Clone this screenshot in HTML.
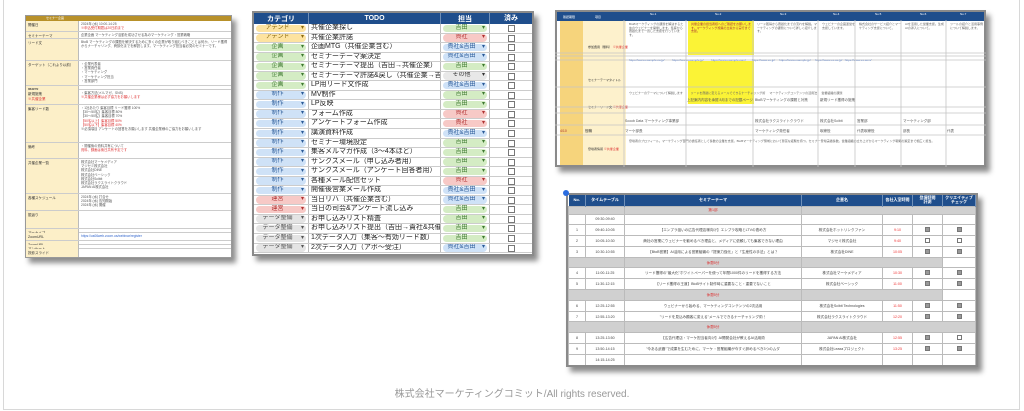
<!DOCTYPE html>
<html><head><meta charset="utf-8">
<style>
*{box-sizing:border-box;margin:0;padding:0}
body{width:1024px;height:411px;background:#fff;position:relative;overflow:hidden;font-family:"Liberation Sans","Noto Sans CJK JP",sans-serif}
.frame{position:absolute;left:3px;top:-5px;width:1017px;height:415px;border:1px solid #d8d8d8}
.doc{position:absolute;background:#fff;border:2px solid #8a8a8a;box-shadow:4px 5px 5px rgba(0,0,0,.45);overflow:hidden}
table{border-collapse:collapse;width:100%;table-layout:fixed}
td,th{overflow:hidden;white-space:nowrap}
/* doc2 */
#d2{left:252px;top:11px;width:282px;height:245px}
#d2 .hd{display:flex;height:11px;background:#1f4e8c;color:#fff;font-size:7px;line-height:11px;font-weight:bold}
#d2 .rw{display:flex;height:9.55px;border-bottom:1px solid #ccc;font-size:7px;line-height:8.5px;color:#222;overflow:hidden}
#d2 .c1{width:55px;border-right:1px solid #bbb;padding:0.5px 2px;text-align:center;flex:none}
#d2 .c2{width:132px;border-right:1px solid #bbb;padding:0 2px;flex:none;white-space:nowrap;overflow:hidden}
#d2 .c3{width:49px;border-right:1px solid #bbb;padding:0.5px 2px;flex:none;text-align:center}
#d2 .c4{flex:1;text-align:center;padding-top:1px}
.pill{display:block;border-radius:4px;height:7.5px;font-size:6px;line-height:7.5px;text-align:center;position:relative;padding-right:7px;white-space:nowrap}
.pill:after{content:"▾";position:absolute;right:2px;top:0;font-size:6px}
.at{background:#fde3a0;color:#8a6a10}.ki{background:#d4ecc4;color:#3e7a30}.se{background:#cfe2f7;color:#2a5a98}.un{background:#f7c9c6;color:#b03030}.de{background:#e4e4e4;color:#555}.so{background:#e8e8e8;color:#333}
.cb{display:inline-block;width:7px;height:7px;border:1px solid #777;background:#fff;vertical-align:top}
/* doc1 */
#d1{left:25px;top:15px;width:207px;height:243px;border-width:1px;border-color:#999}
#d1 .row{position:absolute;left:0;width:100%;border-bottom:1px solid #ccc}
#d1 .l{position:absolute;left:0;top:0;bottom:0;width:53px;background:#fcefc8;border-right:1px solid #bbb;font-size:3.5px;color:#333;padding:2px}
#d1 .r{position:absolute;left:55px;top:1px;right:2px;font-size:3.3px;line-height:4.2px;color:#555;white-space:normal;overflow:hidden;bottom:0}
.red{color:#d33}
/* doc3 */
#d3{left:555px;top:10px;width:431px;height:157px;border-width:2px}
#d3 .c{position:absolute;overflow:hidden;font-size:3px;line-height:3.6px;color:#666;border-right:1px solid #bbb;border-bottom:1px solid #bbb;padding:1px;white-space:normal}
/* doc4 */
#d4{left:566px;top:193px;width:412px;height:174px;border-width:2px}
#d4 th{background:#1f4e8c;color:#fff;font-size:4px;height:11px;border-right:1px solid #6f8fb8;line-height:4.5px}
#d4 td{height:10.8px;font-size:3.6px;line-height:4px;color:#444;border:1px solid #bbb;text-align:center}
#d4 tr.g td{background:#d0d0d0;color:#d33}
#d4 .t{color:#e33}
#d4 .k{display:inline-block;width:5px;height:5px;background:#999;border:1px solid #777}
#d4 .k.e{background:#fff}
.foot{position:absolute;left:0;width:1024px;top:385px;text-align:center;font-size:10px;color:#999}
</style></head><body>
<div class="frame"></div>

<!-- doc1 -->
<div class="doc" id="d1">
<div style="position:absolute;left:0;top:0;width:100%;height:5px;background:#b8912a;font-size:3px;color:#fff;padding-left:20px">セミナー企画</div>
<div class="row" style="top:5px;height:11px"><div class="l">開催日</div><div class="r">2024年 (水) 10:00-14:25<br><span class="red">※申込受付期間は20日前まで</span></div></div>
<div class="row" style="top:16px;height:7px"><div class="l">セミナーテーマ</div><div class="r">企業企画 マーケティング活動を成功させる為のマーケティング・営業戦略</div></div>
<div class="row" style="top:23px;height:22px"><div class="l">リード文</div><div class="r">BtoB マーケティングの課題を解決するために多くの企業が取り組むべきこととは何か。リード獲得からナーチャリング、商談化までを解説します。マーケティング担当者必見のセミナーです。</div></div>
<div class="row" style="top:45px;height:25px"><div class="l">ターゲット（これより以前）</div><div class="r">・企業代表者<br>・営業責任者<br>・マーケティング<br>・マーケティング担当<br>・営業部門</div></div>
<div class="row" style="top:70px;height:4px"><div class="l">開催数</div></div>
<div class="row" style="top:74px;height:15px"><div class="l">新規施策<br><span class="red">※共催企業</span></div><div class="r">・集客方法(メルマガ、SNS)<br><span class="red">※共催企業様は必ず協力をお願いします</span></div></div>
<div class="row" style="top:89px;height:38px"><div class="l">集客リード数</div><div class="r">・1社あたり 集客目標 リード獲得 100%<br>【30〜50名】集客目標 80%<br>【30〜50名】集客目標 70%<br><span class="red">【50名以上】集客目標 50%<br>【50名以下】集客目標 40%</span><br>※必須項目 アンケートの回答をお願いします 共催企業様のご協力をお願いします</div></div>
<div class="row" style="top:127px;height:16px"><div class="l">備考</div><div class="r">・開催後の資料共有について<br><span class="red">資料、録画は後日共有予定です</span></div></div>
<div class="row" style="top:143px;height:35px"><div class="l">共催企業一覧</div><div class="r">株式会社マーケメディア<br>マジセミ株式会社<br>株式会社DINE<br>株式会社ベーシック<br>株式会社Scibit<br>株式会社ラクスライトクラウド<br>JAPAN AI株式会社</div></div>
<div class="row" style="top:178px;height:17px"><div class="l">各種スケジュール</div><div class="r">2024年 (水) 打合せ<br>2024年 (水) 告知開始<br>2024年 (水) 開催</div></div>
<div class="row" style="top:195px;height:18px"><div class="l">振返り</div></div>
<div class="row" style="top:213px;height:4px"><div class="l">アーカイブ</div></div>
<div class="row" style="top:217px;height:8px"><div class="l">ZoomURL</div><div class="r" style="color:#36c">https://us06web.zoom.us/webinar/register</div></div>
<div class="row" style="top:225px;height:4px"><div class="l">ZoomURL</div></div>
<div class="row" style="top:229px;height:4px"><div class="l">アンケート</div></div>
<div class="row" style="top:233px;height:10px;border:0"><div class="l">投影スライド</div></div>
</div>

<!-- doc2 -->
<div class="doc" id="d2">
<div class="hd"><div class="c1" style="border-color:#6f8fb8">カテゴリ</div><div class="c2" style="text-align:center;border-color:#6f8fb8">TODO</div><div class="c3" style="border-color:#6f8fb8">担当</div><div class="c4" style="padding:0">済み</div></div>
<div class="rw"><div class="c1"><span class="pill at">アテンド</span></div><div class="c2">共催企業探し</div><div class="c3"><span class="pill ki">吉田</span></div><div class="c4"><span class="cb"></span></div></div>
<div class="rw"><div class="c1"><span class="pill at">アテンド</span></div><div class="c2">共催企業許諾</div><div class="c3"><span class="pill un">貴社</span></div><div class="c4"><span class="cb"></span></div></div>
<div class="rw"><div class="c1"><span class="pill ki">企画</span></div><div class="c2">企画MTG（共催企業含む）</div><div class="c3"><span class="pill se">貴社&amp;吉田</span></div><div class="c4"><span class="cb"></span></div></div>
<div class="rw"><div class="c1"><span class="pill ki">企画</span></div><div class="c2">セミナーテーマ案決定</div><div class="c3"><span class="pill se">貴社&amp;吉田</span></div><div class="c4"><span class="cb"></span></div></div>
<div class="rw"><div class="c1"><span class="pill ki">企画</span></div><div class="c2">セミナーテーマ提出（吉田→共催企業）</div><div class="c3"><span class="pill ki">吉田</span></div><div class="c4"><span class="cb"></span></div></div>
<div class="rw"><div class="c1"><span class="pill ki">企画</span></div><div class="c2">セミナーテーマ許諾&amp;戻し（共催企業→吉田）</div><div class="c3"><span class="pill so">その他</span></div><div class="c4"><span class="cb"></span></div></div>
<div class="rw"><div class="c1"><span class="pill ki">企画</span></div><div class="c2">LP用リード文作成</div><div class="c3"><span class="pill se">貴社&amp;吉田</span></div><div class="c4"><span class="cb"></span></div></div>
<div class="rw"><div class="c1"><span class="pill se">制作</span></div><div class="c2">MV制作</div><div class="c3"><span class="pill ki">吉田</span></div><div class="c4"><span class="cb"></span></div></div>
<div class="rw"><div class="c1"><span class="pill se">制作</span></div><div class="c2">LP反映</div><div class="c3"><span class="pill ki">吉田</span></div><div class="c4"><span class="cb"></span></div></div>
<div class="rw"><div class="c1"><span class="pill se">制作</span></div><div class="c2">フォーム作成</div><div class="c3"><span class="pill un">貴社</span></div><div class="c4"><span class="cb"></span></div></div>
<div class="rw"><div class="c1"><span class="pill se">制作</span></div><div class="c2">アンケートフォーム作成</div><div class="c3"><span class="pill un">貴社</span></div><div class="c4"><span class="cb"></span></div></div>
<div class="rw"><div class="c1"><span class="pill se">制作</span></div><div class="c2">講演資料作成</div><div class="c3"><span class="pill se">貴社&amp;吉田</span></div><div class="c4"><span class="cb"></span></div></div>
<div class="rw"><div class="c1"><span class="pill se">制作</span></div><div class="c2">セミナー環境設定</div><div class="c3"><span class="pill ki">吉田</span></div><div class="c4"><span class="cb"></span></div></div>
<div class="rw"><div class="c1"><span class="pill se">制作</span></div><div class="c2">集客メルマガ作成（3〜4本ほど）</div><div class="c3"><span class="pill ki">吉田</span></div><div class="c4"><span class="cb"></span></div></div>
<div class="rw"><div class="c1"><span class="pill se">制作</span></div><div class="c2">サンクスメール（申し込み者用）</div><div class="c3"><span class="pill ki">吉田</span></div><div class="c4"><span class="cb"></span></div></div>
<div class="rw"><div class="c1"><span class="pill se">制作</span></div><div class="c2">サンクスメール（アンケート回答者用）</div><div class="c3"><span class="pill ki">吉田</span></div><div class="c4"><span class="cb"></span></div></div>
<div class="rw"><div class="c1"><span class="pill se">制作</span></div><div class="c2">各種メール配信セット</div><div class="c3"><span class="pill un">貴社</span></div><div class="c4"><span class="cb"></span></div></div>
<div class="rw"><div class="c1"><span class="pill se">制作</span></div><div class="c2">開催後営業メール作成</div><div class="c3"><span class="pill se">貴社&amp;吉田</span></div><div class="c4"><span class="cb"></span></div></div>
<div class="rw"><div class="c1"><span class="pill un">運営</span></div><div class="c2">当日リハ（共催企業含む）</div><div class="c3"><span class="pill se">貴社&amp;吉田</span></div><div class="c4"><span class="cb"></span></div></div>
<div class="rw"><div class="c1"><span class="pill un">運営</span></div><div class="c2">当日の司会&amp;アンケート流し込み</div><div class="c3"><span class="pill ki">吉田</span></div><div class="c4"><span class="cb"></span></div></div>
<div class="rw"><div class="c1"><span class="pill de">データ整備</span></div><div class="c2">お申し込みリスト精査</div><div class="c3"><span class="pill ki">吉田</span></div><div class="c4"><span class="cb"></span></div></div>
<div class="rw"><div class="c1"><span class="pill de">データ整備</span></div><div class="c2">お申し込みリスト提出（吉田→貴社&amp;共催企業）</div><div class="c3"><span class="pill ki">吉田</span></div><div class="c4"><span class="cb"></span></div></div>
<div class="rw"><div class="c1"><span class="pill de">データ整備</span></div><div class="c2">1次データ入力（集客〜有効リード数）</div><div class="c3"><span class="pill ki">吉田</span></div><div class="c4"><span class="cb"></span></div></div>
<div class="rw"><div class="c1"><span class="pill de">データ整備</span></div><div class="c2">2次データ入力（アポ〜受注）</div><div class="c3"><span class="pill se">貴社&amp;吉田</span></div><div class="c4"><span class="cb"></span></div></div>
</div>

<!-- doc3 -->
<div class="doc" id="d3">
<div style="position:absolute;left:0;top:0;width:100%;height:9px;background:#1f4e8c"></div>
<div style="position:absolute;left:3px;top:9px;width:23px;height:146px;background:#f6d47c"></div>
<div style="position:absolute;left:26px;top:9px;width:43px;height:146px;background:#fdf1cc"></div>
<div style="position:absolute;left:131px;top:9px;width:66px;height:34px;background:#fbf336"></div>
<div style="position:absolute;left:131px;top:49px;width:66px;height:43px;background:#fbf336"></div>
<div class="c" style="left:30px;top:33px;border:0;color:#333">参加費用（無料） <span class="red">※共催企業</span></div>
<div class="c" style="left:30px;top:66px;border:0;color:#333">セミナーテーマタイトル</div>
<div class="c" style="left:30px;top:93px;border:0;color:#333">セミナーリード文 <span class="red">※共催企業</span></div>
<div class="c" style="left:30px;top:135px;border:0;color:#333">登壇者情報 <span class="red">※共催企業</span></div>
<div class="c" style="left:71px;top:10px;width:58px;height:28px;border:0">BtoBマーケティングの課題を解決するためのウェビナーを開催します。集客から商談化まで一貫した支援を行っています。</div>
<div class="c" style="left:133px;top:10px;width:62px;height:28px;border:0;color:#a33">共催企業の担当者様へのご確認をお願いします。マーケティング施策の立案から実行まで支援。</div>
<div class="c" style="left:199px;top:10px;width:62px;height:24px;border:0">リード獲得から商談化までの流れを解説。マーケティングの課題について詳しく紹介します。</div>
<div class="c" style="left:264px;top:10px;width:35px;height:20px;border:0">ウェビナーの企画運営を支援しています。</div>
<div class="c" style="left:301px;top:10px;width:44px;height:30px;border:0">株式会社のサービス紹介とマーケティング支援について。</div>
<div class="c" style="left:347px;top:10px;width:43px;height:24px;border:0">AIを活用した営業支援。生成AIの導入について。</div>
<div class="c" style="left:392px;top:10px;width:36px;height:24px;border:0">ツールの紹介と活用事例について解説します。</div>
<div class="c" style="left:71px;top:46px;width:355px;height:6px;border:0;color:#36c">https://www.example.co.jp/ &nbsp; &nbsp; &nbsp; &nbsp; https://www.example.jp/ &nbsp; &nbsp; &nbsp; &nbsp; https://www.example.com/ &nbsp; &nbsp; &nbsp; https://www.ex.jp/ &nbsp; &nbsp; https://www.example.jp/ &nbsp; &nbsp; https://www.ex.co.jp/ &nbsp; https://www.ex.com/</div>
<div class="c" style="left:71px;top:79px;width:355px;height:12px;border:0">ウェビナーのテーマについて解説します &nbsp; &nbsp; &nbsp; &nbsp; リードを商談に変えるメールでできるナーチャリング術 &nbsp; &nbsp; マーケティングコンテンツの活用法 &nbsp; &nbsp; 営業組織の課題</div>
<div class="c" style="left:71px;top:127px;width:355px;height:28px;border:0">登壇者のプロフィール。マーケティング部門の責任者として多数の企業を支援。BtoBマーケティング領域において豊富な経験を持つ。セミナー登壇実績多数。営業組織の立ち上げからマーケティング戦略の策定まで幅広く担当。</div>
</div>

<!-- doc4 -->
<div class="doc" id="d4">
<table>
<colgroup><col style="width:17px"><col style="width:39px"><col style="width:177px"><col style="width:81px"><col style="width:30px"><col style="width:30px"><col></colgroup>
<tr><th>No.</th><th>タイムテーブル</th><th>セミナーテーマ</th><th>企業名</th><th>各社入室時間</th><th>登壇時間<br>計測</th><th>クリエイティブ<br>チェック</th></tr>
<tr class="g"><td colspan="2" style="height:8px"></td><td style="height:8px">第1部</td><td colspan="4" style="height:8px"></td></tr>
<tr><td></td><td>09:30-09:40</td><td></td><td></td><td></td><td></td><td></td></tr>
<tr><td>1</td><td>09:40-10:05</td><td>【エンプラ狙いの広告代理店様向け】エンプラ攻略とLTVの高め方</td><td>株式会社ホットリンクファン</td><td class="t">9:10</td><td><span class="k"></span></td><td><span class="k"></span></td></tr>
<tr><td>2</td><td>10:05-10:30</td><td>商社の営業にウェビナーを勧めるべき理由と、メディアに依頼しても集客できない理由</td><td>マジセミ株式会社</td><td class="t">9:40</td><td><span class="k e"></span></td><td><span class="k e"></span></td></tr>
<tr><td>3</td><td>10:30-10:55</td><td>【BtoB営業】AI活用による営業組織の「提案力強化」と「生産性の手法」とは？</td><td>株式会社DINE</td><td class="t">10:05</td><td><span class="k"></span></td><td><span class="k"></span></td></tr>
<tr class="g"><td colspan="2"></td><td>休憩5分</td><td colspan="3"></td><td style="background:#fff"></td></tr>
<tr><td>4</td><td>11:00-11:25</td><td>リード獲得の"最大化"ホワイトペーパーを使って年間1000件のリードを獲得する方法</td><td>株式会社マーケメディア</td><td class="t">10:30</td><td><span class="k"></span></td><td><span class="k"></span></td></tr>
<tr><td>5</td><td>11:30-12:15</td><td>【リード獲得の王道】BtoBサイト制作時に重要なこと・重要でないこと</td><td>株式会社ベーシック</td><td class="t">11:00</td><td><span class="k"></span></td><td><span class="k"></span></td></tr>
<tr class="g"><td colspan="2"></td><td>休憩5分</td><td colspan="3"></td><td style="background:#fff"></td></tr>
<tr><td>6</td><td>12:25-12:55</td><td>ウェビナーから始める、マーケティングコンテンツの2次活用</td><td>株式会社Scibit Technologies</td><td class="t">11:50</td><td><span class="k"></span></td><td><span class="k"></span></td></tr>
<tr><td>7</td><td>12:55-13:20</td><td>"リードを見込み顧客に変える"メールでできるナーチャリング術！</td><td>株式会社ラクスライトクラウド</td><td class="t">12:20</td><td><span class="k"></span></td><td><span class="k"></span></td></tr>
<tr class="g"><td colspan="2"></td><td>休憩5分</td><td colspan="4"></td></tr>
<tr><td>8</td><td>13:25-13:50</td><td>【広告代理店・マーケ担当者向け】AI開発会社が教えるAI活用術</td><td>JAPAN AI株式会社</td><td class="t">12:55</td><td><span class="k"></span></td><td><span class="k e"></span></td></tr>
<tr><td>9</td><td>13:50-14:15</td><td>"今ある武器"で成果を生むために、マーケ・営業組織が今すぐ辞めるべき3つのムダ</td><td>株式会社Leaxaプロジェクト</td><td class="t">13:25</td><td><span class="k"></span></td><td><span class="k"></span></td></tr>
<tr><td></td><td>14:15-14:25</td><td></td><td></td><td></td><td></td><td></td></tr>
</table>
</div>
<div style="position:absolute;left:563px;top:190px;width:6px;height:6px;border-radius:50%;background:#2a6de0"></div>

<div class="foot">株式会社マーケティングコミット/All rights reserved.</div>

<svg style="position:absolute;left:555px;top:10px" width="431" height="157">
<g stroke="#c4c4c4" stroke-width="0.8">
<line x1="69" y1="10" x2="69" y2="157"/><line x1="131" y1="10" x2="131" y2="157"/><line x1="198" y1="10" x2="198" y2="157"/><line x1="263" y1="10" x2="263" y2="157"/><line x1="300" y1="10" x2="300" y2="157"/><line x1="346" y1="10" x2="346" y2="157"/><line x1="391" y1="10" x2="391" y2="157"/>
<line x1="0" y1="43" x2="431" y2="43"/><line x1="0" y1="46" x2="431" y2="46"/><line x1="0" y1="50" x2="431" y2="50"/><line x1="0" y1="77" x2="431" y2="77"/><line x1="0" y1="97" x2="431" y2="97"/><line x1="0" y1="103" x2="431" y2="103"/><line x1="0" y1="115" x2="431" y2="115"/><line x1="0" y1="125" x2="431" y2="125"/>
</g>
<g fill="#555" font-size="3.5" font-family="Liberation Sans, Noto Sans CJK JP, sans-serif">
<text x="132" y="91">上記案内内容を承認 8月までの記載ページ</text>
<text x="200" y="91">BtoBマーケティングの課題と対策</text>
<text x="265" y="91">新規リード獲得の施策</text>
<text x="70" y="112">Scoob Data マーケティング事業部</text><text x="200" y="112">株式会社ラクスライトクラウド</text><text x="265" y="112">株式会社Scibit</text><text x="302" y="112">営業部</text><text x="348" y="112">マーケティング部</text>
<text x="5" y="122" fill="#a33">4/10</text><text x="30" y="122" fill="#333">役職</text><text x="70" y="122">マーケ部長</text><text x="200" y="122">マーケティング責任者</text><text x="265" y="122">取締役</text><text x="302" y="122">代表取締役</text><text x="348" y="122">部長</text><text x="392" y="122">代表</text>
</g>
<g fill="#fff" font-size="3" font-family="Liberation Sans, Noto Sans CJK JP, sans-serif"><text x="8" y="8">確認期限</text><text x="40" y="8">項目</text><text x="95" y="5">No.1</text><text x="160" y="5">No.2</text><text x="225" y="5">No.3</text><text x="278" y="5">No.4</text><text x="320" y="5">No.5</text><text x="365" y="5">No.6</text><text x="405" y="5">No.7</text></g>
</svg>
</body></html>
